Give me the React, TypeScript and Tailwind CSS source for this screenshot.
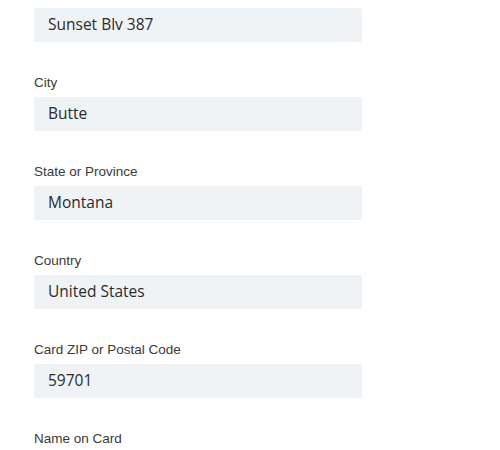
const fields = [
  { label: "", value: "Sunset Blv 387" },
  { label: "City", value: "Butte" },
  { label: "State or Province", value: "Montana" },
  { label: "Country", value: "United States" },
  { label: "Card ZIP or Postal Code", value: "59701" },
  { label: "Name on Card", value: "" },
];

export default function App() {
  return (
    <div className="w-[500px] h-[450px] overflow-hidden bg-white pt-[8px] pl-[34px]">
      {fields.map((f, i) => (
        <div key={i} className="w-[328px] mb-[32px]">
          {f.label && (
            <label className="block text-[13.5px] leading-[18px] mb-[5px] text-[#3a3a3a] font-['Liberation_Sans',Arial,sans-serif]">
              {f.label}
            </label>
          )}
          <div className="h-[34px] rounded-[2px] bg-[#f0f3f6] px-[14px] flex items-center text-[15.5px] text-[#2b2b2b] font-['Open_Sans',sans-serif]">
            {f.value}
          </div>
        </div>
      ))}
    </div>
  );
}
